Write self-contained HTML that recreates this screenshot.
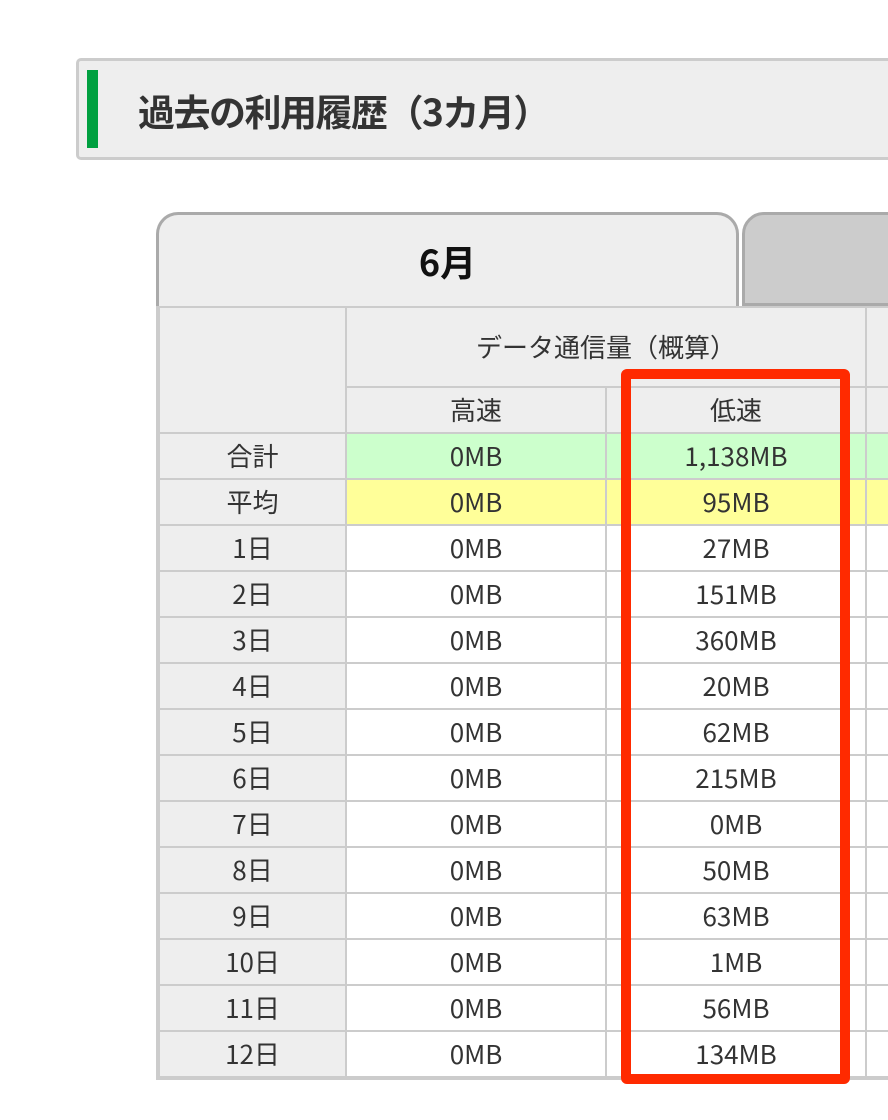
<!DOCTYPE html>
<html><head><meta charset="utf-8"><style>
html,body{margin:0;padding:0;background:#fff;width:888px;height:1120px;overflow:hidden;position:relative;font-family:"Noto Sans CJK JP","Liberation Sans",sans-serif;color:#333}
.hd{position:absolute;left:76px;top:58px;width:830px;height:96px;background:#eee;border:3px solid #ccc;border-radius:5px}
.bar{position:absolute;left:87px;top:70px;width:11px;height:78px;background:#00a040}
.ht{position:absolute;left:138px;top:84px;font-size:37px;font-weight:bold;line-height:52px;color:#333;letter-spacing:-1.5px}
.tab1{position:absolute;left:156px;top:212px;width:577px;height:100px;background:#eee;border:3px solid #aaa;border-bottom:none;border-radius:22px 22px 0 0}
.tab1 span{position:absolute;left:0;right:0;top:20px;text-align:center;font-size:36px;font-weight:bold;color:#111;line-height:52px}
.tab2{position:absolute;left:742px;top:212px;width:200px;height:88px;background:#ccc;border:3px solid #aaa;border-radius:22px 22px 0 0}
table{position:absolute;left:156px;top:306px;border-collapse:collapse;border:4px solid #ccc;border-top:2px solid #ccc;width:760px;table-layout:fixed}
td{border:2px solid #ccc;text-align:center;font-size:26px;height:44px;padding:0;background:#fff;line-height:30px}
td.l{background:#eee}
.g td.v{background:#ccffcc}.y td.v{background:#ffff99}
.red{position:absolute;left:621px;top:369px;width:209px;height:695px;border:10px solid #ff2a00;border-radius:6px}
</style></head><body>
<div class="hd"></div><div class="bar"></div><div class="ht">過去の利用履歴（3カ月）</div>
<div class="tab2"></div>
<div class="tab1"><span>6月</span></div>
<table>
<colgroup><col style="width:188px"><col style="width:260px"><col style="width:260px"><col style="width:52px"></colgroup>
<tr><td class="l" rowspan="2"></td><td class="l" colspan="2" style="height:78px">データ通信量（概算）</td><td class="l"></td></tr>
<tr><td class="l">高速</td><td class="l">低速</td><td class="l"></td></tr>
<tr class="g"><td class="l">合計</td><td class="v">0MB</td><td class="v">1,138MB</td><td class="v"></td></tr>
<tr class="y"><td class="l">平均</td><td class="v">0MB</td><td class="v">95MB</td><td class="v"></td></tr>
<tr><td class="l">1日</td><td>0MB</td><td>27MB</td><td></td></tr>
<tr><td class="l">2日</td><td>0MB</td><td>151MB</td><td></td></tr>
<tr><td class="l">3日</td><td>0MB</td><td>360MB</td><td></td></tr>
<tr><td class="l">4日</td><td>0MB</td><td>20MB</td><td></td></tr>
<tr><td class="l">5日</td><td>0MB</td><td>62MB</td><td></td></tr>
<tr><td class="l">6日</td><td>0MB</td><td>215MB</td><td></td></tr>
<tr><td class="l">7日</td><td>0MB</td><td>0MB</td><td></td></tr>
<tr><td class="l">8日</td><td>0MB</td><td>50MB</td><td></td></tr>
<tr><td class="l">9日</td><td>0MB</td><td>63MB</td><td></td></tr>
<tr><td class="l">10日</td><td>0MB</td><td>1MB</td><td></td></tr>
<tr><td class="l">11日</td><td>0MB</td><td>56MB</td><td></td></tr>
<tr><td class="l">12日</td><td>0MB</td><td>134MB</td><td></td></tr>
</table>
<div class="red"></div>
</body></html>
